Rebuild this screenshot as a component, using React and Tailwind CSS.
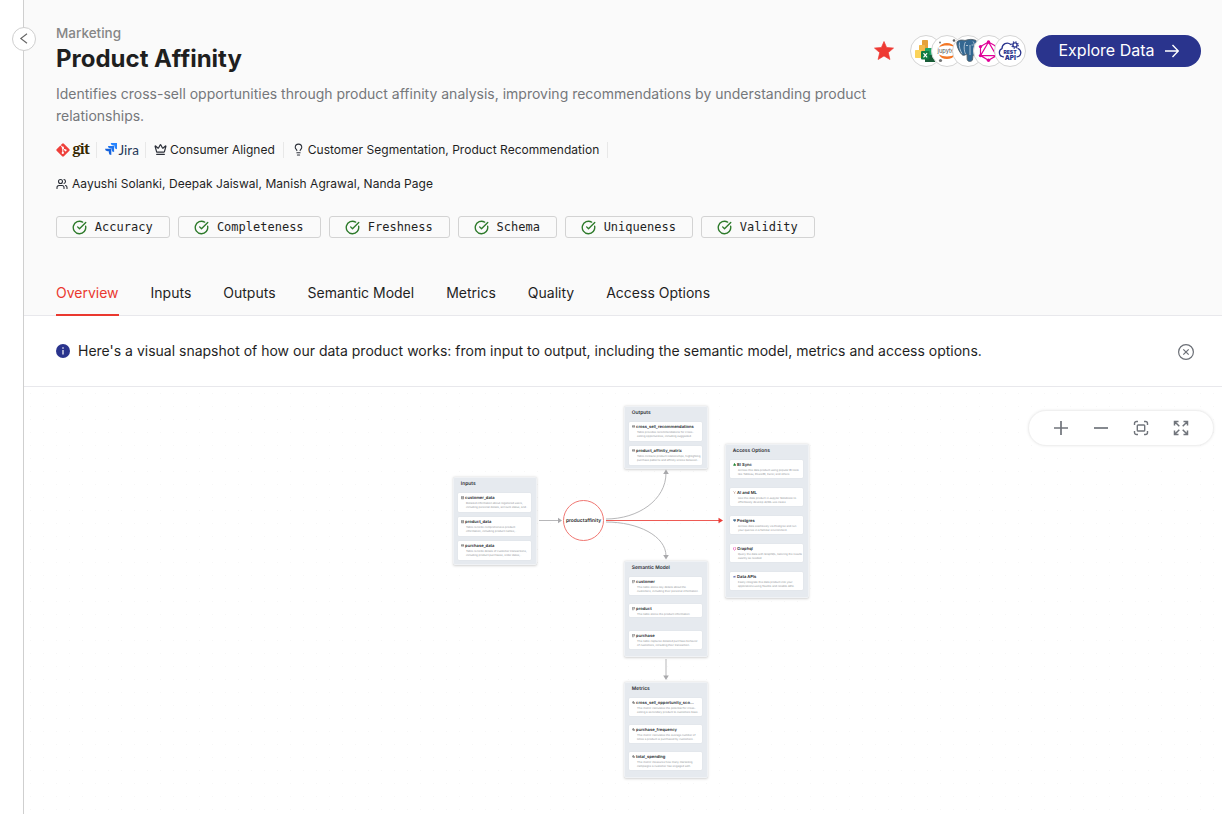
import React from "react";
import { Crown, Lightbulb, Users, CircleCheckBig } from "lucide-react";

function GitLogo() {
  return (
    <span className="flex items-center w-[35px] h-4">
      <svg className="-ml-[1.500px] -mt-px shrink-0" width="16" height="16" viewBox="0 0 15 16">
        <rect x="2.400" y="2.900" width="10.200" height="10.200" rx="1.200" fill="#ee3f3a" transform="rotate(45 7.5 8)" />
        <path d="M5 3.200 7.300 5.600V11M7.300 6l2.600 2.400" stroke="#fff" strokeWidth="1" fill="none" />
        <circle cx="7.300" cy="5.700" r="1.100" fill="#fff" />
        <circle cx="7.300" cy="10.900" r="1.100" fill="#fff" />
        <circle cx="10" cy="8.300" r="1.100" fill="#fff" />
      </svg>
      <span className="ml-[2px] -mt-[4px] font-['Noto_Serif','DejaVu_Serif',serif] font-bold text-[14.500px] leading-4 tracking-[-0.800px] text-[#362701]">git</span>
    </span>
  );
}

function JiraLogo() {
  return (
    <span className="flex items-center w-[35px] h-4">
      <svg className="shrink-0 -ml-[0.500px] -mt-[2px]" width="12" height="12" viewBox="0 0 12 12">
        <path d="M5.700 0H12v6.200a2.600 2.600 0 0 1-2.500-2.600V2.500H8.200A2.600 2.600 0 0 1 5.700 0z" fill="#2684ff" />
        <path d="M2.900 2.900h6.200v6.200a2.600 2.600 0 0 1-2.500-2.600V5.400H5.400a2.600 2.600 0 0 1-2.500-2.500z" fill="#1f74ee" />
        <path d="M0 5.800h6.300V12a2.600 2.600 0 0 1-2.500-2.600V8.300H2.500A2.600 2.600 0 0 1 0 5.800z" fill="#1562dc" />
      </svg>
      <span className="ml-[2px] font-[Lato,sans-serif] text-[13.500px] leading-4 text-[#253858]">Jira</span>
    </span>
  );
}

function Divider({ className = "" }) {
  return <span className={"h-4 w-px bg-[#e8e8e8] " + className} />;
}

const toolIcons = [
  <svg key="bi" width="30" height="30" viewBox="0 0 30 30">
    <rect x="11" y="4" width="6" height="18" rx=".8" fill="#e5a03a" />
    <rect x="8" y="9" width="6" height="13" rx=".8" fill="#f3b94a" />
    <rect x="4" y="14" width="6.500" height="8" rx=".8" fill="#fbd35a" />
    <rect x="14" y="12" width="10" height="14" rx="1" fill="#21a366" />
    <rect x="14" y="19" width="10" height="7" fill="#185c37" />
    <rect x="10" y="15" width="8.500" height="8.500" rx="1" fill="#107c41" />
    <path d="m12.500 17.200 3.600 4.200m0-4.200-3.600 4.200" stroke="#fff" strokeWidth="1.200" />
  </svg>,
  <svg key="jupyter" width="30" height="30" viewBox="0 0 30 30">
    <path d="M7 11.500c2.200-6 13.500-6 16 0-4-2.600-12-2.600-16 0zM7 18.500c2.200 6 13.500 6 16 0-4 2.600-12 2.600-16 0z" fill="#f37726" />
    <circle cx="8" cy="6.500" r="1" fill="#757575" />
    <circle cx="22" cy="4.500" r="1.300" fill="#616161" />
    <circle cx="8.500" cy="24.500" r="1.600" fill="#757575" />
    <text x="15" y="16.700" fontSize="5.800" textAnchor="middle" fontFamily="Inter, sans-serif" fill="#4e4e4e">jupyter</text>
  </svg>,
  <svg key="postgres" width="30" height="30" viewBox="0 0 30 30">
    <path d="M4 6c2-2.500 6-2 8-1.500C16 3 20 3 23 4.500c3 2 .5 8-1.500 12l3 1c-1 1.500-3 2-4.500 1.500l-.5 5c-1 2-5 2-5.300-.5l-.2-5.500c-1.500.5-3 2-4.500 1C6.500 17 3 9 4 6z" fill="#336791" stroke="#4f5d68" strokeWidth=".9" />
    <path d="M12.500 6c-2 3-1.500 9 0 12M20 5.500c2.500 3 1 7 .5 10M6.500 6.500c-1 4 1 8.500 2.500 11M13 9.500h2M18.500 9h2M17 9v10" stroke="#dfe8ef" strokeWidth=".7" fill="none" />
  </svg>,
  <svg key="graphql" width="30" height="30" viewBox="0 0 30 30">
    <path d="M14.500 6 22.500 10.600v9L14.500 24.300 6.500 19.600v-9zM14.500 6 6.500 19.600h16z" fill="none" stroke="#e10098" strokeWidth="1.200" />
    <g fill="#e10098">
      <circle cx="14.500" cy="6" r="1.700" /><circle cx="22.500" cy="10.600" r="1.700" /><circle cx="22.500" cy="19.600" r="1.700" />
      <circle cx="14.500" cy="24.300" r="1.700" /><circle cx="6.500" cy="19.600" r="1.700" /><circle cx="6.500" cy="10.600" r="1.700" />
    </g>
  </svg>,
  <svg key="rest" width="30" height="30" viewBox="0 0 30 30">
    <path d="M8.500 20.800C4 21 2.800 14.500 7 12.600 7 8 12 5.500 15.800 8.500M23 12.500c4.200 2 3.400 8-1 8.300" fill="none" stroke="#2a348d" strokeWidth="1.300" strokeLinecap="round" />
    <circle cx="20" cy="9" r="2.100" fill="none" stroke="#2a348d" strokeWidth="1.400" />
    <circle cx="20" cy="9" r="3.200" fill="none" stroke="#2a348d" strokeWidth="1.200" strokeDasharray="1.300 1.210" />
    <text x="15" y="18.200" fontSize="5" fontWeight="900" textAnchor="middle" fontFamily="Inter, sans-serif" fill="#2a348d">REST</text>
    <text x="15.200" y="23.800" fontSize="6.400" fontWeight="900" textAnchor="middle" fontFamily="Inter, sans-serif" fill="#2a348d">API</text>
  </svg>,
];

const checks = [
  ["Accuracy", "w-[114px]"],
  ["Completeness", "w-[143px]"],
  ["Freshness", "w-[121px]"],
  ["Schema", "w-[99px]"],
  ["Uniqueness", "w-[128px]"],
  ["Validity", "w-[114px]"],
];

const tabs = ["Overview", "Inputs", "Outputs", "Semantic Model", "Metrics", "Quality", "Access Options"];

function CardIcon({ kind }) {
  const paths = {
    table: <path d="M1 1h8v8H1zM1 4h8M1 6.500h8" stroke="#444" strokeWidth="1.300" fill="none" />,
    output: <path d="M1 2h8v5H1zM1 4.500h8" stroke="#444" strokeWidth="1.300" fill="none" />,
    model: <path d="M1 1h8v4M1 1v8h4M1 4h8M5 9l4-4" stroke="#444" strokeWidth="1.300" fill="none" />,
    metric: <path d="M0 6h2l2-5 2 8 2-4h2" stroke="#222" strokeWidth="1.500" fill="none" />,
    sync: <path d="M3 1h3v3h3v5H1V5h2z" fill="#238636" />,
    ml: <path d="M1 1l4 4 4-4M5 5v4" stroke="#b08070" strokeWidth="1.500" fill="none" />,
    postgres: <path d="M1 1h8v5H7v3H4V6H1z" fill="#4d7598" />,
    graphql: <path d="M5 0l4 3v4L5 10 1 7V3z" stroke="#e535ab" strokeWidth="1.800" fill="none" />,
    api: <path d="M1 7a3 3 0 0 1 3-4l4-1v6H1z" fill="#7a82bc" />,
  };
  return <svg className="shrink-0" width="3.200" height="3.200" viewBox="0 0 10 10">{paths[kind]}</svg>;
}

const panels = [
  {
    title: "Inputs", box: "left-[428.500px] top-[89.500px] w-[84px] h-[88.500px]", list: "gap-[4.800px]", card: "h-[19.200px]",
    cards: [
      ["table", "customer_data", "Detailed information about registered users,", "including personal details, account status, and..."],
      ["table", "product_data", "Table records comprehensive product", "information, including product names,..."],
      ["output", "purchase_data", "Table records details of customer transactions,", "including product purchases, order dates,..."],
    ],
  },
  {
    title: "Outputs", box: "left-[599.500px] top-[18.500px] w-[84px] h-[63.500px]", list: "gap-[4.800px]", card: "h-[19.200px]",
    cards: [
      ["output", "cross_sell_recommendations", "Table provides recommendations for cross-", "selling opportunities, including suggested..."],
      ["output", "product_affinity_matrix", "Table contains product relationships, highlighting", "purchase patterns and affinity scores between..."],
    ],
  },
  {
    title: "Access Options", box: "left-[700.500px] top-[56.500px] w-[84px] h-[154px]", list: "gap-[9.700px]", card: "h-[18.300px]",
    cards: [
      ["sync", "BI Sync", "Access this data product using popular BI tools", "like Tableau, PowerBI, Excel, and others."],
      ["ml", "AI and ML", "Use this data product in Jupyter Notebook to", "effortlessly develop AI/ML use cases."],
      ["postgres", "Postgres", "Access data seamlessly via Postgres and run", "your queries in a familiar environment."],
      ["graphql", "Graphql", "Query the data with GraphQL, tailoring the results", "exactly as needed."],
      ["api", "Data APIs", "Easily integrate this data product into your", "applications using flexible and reliable APIs."],
    ],
  },
  {
    title: "Semantic Model", box: "left-[599.500px] top-[173.500px] w-[84px] h-[96px]", list: "gap-[9px]", card: "h-[18px]",
    cards: [
      ["model", "customer", "This table stores key details about the", "customers, including their personal information..."],
      ["model", "product", "This table stores the product information", null],
      ["model", "purchase", "This table captures detailed purchase behavior", "of customers, including their transaction..."],
    ],
  },
  {
    title: "Metrics", box: "left-[599.500px] top-[294.500px] w-[84px] h-[96px]", list: "gap-[9px]", card: "h-[18px]",
    cards: [
      ["metric", "cross_sell_opportunity_sco...", "This metric calculates the potential for cross-", "selling a secondary product to customers base..."],
      ["metric", "purchase_frequency", "This metric calculates the average number of", "times a product is purchased by customers..."],
      ["metric", "total_spending", "This metric measures how many marketing", "campaigns a customer has engaged with."],
    ],
  },
];

function Panel({ title, box, list, card, cards }) {
  return (
    <section className={"absolute flex flex-col rounded-[2px] bg-[#e6eaef] border border-[#f0f2f5] shadow-[0_0.500px_2.500px_rgba(0,0,0,0.180)] px-[4.500px] pt-[3.200px] [text-rendering:geometricPrecision] " + box}>
      <h3 className="ml-[2.800px] text-[4.900px] leading-[6px] font-semibold text-[#2c3036] whitespace-nowrap">{title}</h3>
      <div className={"mt-[5.900px] flex flex-col " + list}>
        {cards.map(([kind, name, a, b]) => (
          <div key={name} className={card}>
            <div className={"rounded-[1px] bg-white shadow-[0_0_1px_rgba(0,0,0,0.120)] pl-[3px] pt-[3.900px] overflow-hidden " + (b ? "h-full" : "h-[13.500px]")}>
              <div className="flex gap-[0.900px] text-[4.120px] leading-[4.800px] font-semibold text-[#24272c] whitespace-nowrap">
                <CardIcon kind={kind} />
                {name}
              </div>
              <p className="-mt-[0.600px] pl-[5px] text-[2.740px] leading-[4.500px] text-[#8b8f94] whitespace-nowrap">
                {a}
                {b && <br />}
                {b}
              </p>
            </div>
          </div>
        ))}
      </div>
    </section>
  );
}

export default function App() {
  return (
    <div className="flex h-[814px] w-[1222px] overflow-hidden bg-white font-[Inter,sans-serif] text-[#1f1f1f]">
      <aside className="relative w-6 shrink-0 border-r border-[#cfcfcf]">
        <button className="absolute left-3 top-[26.500px] z-10 flex size-6 items-center justify-center rounded-full border border-[#cfcfcf] bg-white">
          <svg width="10" height="12" viewBox="0 0 10 12" fill="none" stroke="#666" strokeWidth="1.100"><path d="M8 .8 1.800 5.500 8 10.200" /></svg>
        </button>
      </aside>
      <main className="flex min-w-0 flex-1 flex-col">
        <header className="flex h-[316px] shrink-0 flex-col border-b border-[#e8e8ec] bg-[#fafafa] pl-8 pr-[21px]">
          <div className="flex justify-between pt-[23px]">
            <div className="w-[811px]">
              <div className="text-[13.500px] leading-5 font-medium text-[#868686]">Marketing</div>
              <h1 className="text-2xl leading-8 font-bold">Product Affinity</h1>
              <p className="mt-2 text-sm leading-[22px] text-[#75777b] whitespace-nowrap">
                Identifies cross-sell opportunities through product affinity analysis, improving recommendations by understanding product<br />relationships.
              </p>
            </div>
            <div className="mt-3 flex h-8 shrink-0 items-center">
              <svg className="-mt-px" width="20" height="19" viewBox="0 0 20 19"><path d="M10 .5l2.600 6 6.900.6-5.200 4.500 1.600 6.900L10 14.900l-5.900 3.600 1.600-6.900L.5 7.100l6.900-.6z" fill="#ee3a33" stroke="#ee3a33" strokeWidth=".7" strokeLinejoin="round" /></svg>
              <div className="ml-4 flex">
                {toolIcons.map((icon, i) => (
                  <span key={i} className={"flex size-8 shrink-0 items-center justify-center overflow-hidden rounded-full border border-[#d5d5d5] bg-white " + (i ? "-ml-[11px]" : "")}>{icon}</span>
                ))}
              </div>
              <button className="ml-[10px] flex h-8 w-[165px] items-center justify-center rounded-full bg-[#2a348d] text-base text-white">
                <span className="-mt-[2px]">Explore Data</span>
                <svg className="ml-2.5" width="14" height="14" viewBox="0 0 14 14" fill="none" stroke="#fff" strokeWidth="1.400"><path d="M0 7h13M7.500 1l5.800 6-5.800 6" /></svg>
              </button>
            </div>
          </div>

          <div className="mt-[15px] flex h-4 items-center text-xs leading-4 whitespace-nowrap">
            <GitLogo />
            <Divider className="ml-[5px]" />
            <span className="ml-2"><JiraLogo /></span>
            <Divider className="ml-[5px]" />
            <Crown className="ml-2 -mt-px" size={13} strokeWidth={2.200} color="#2b2f38" />
            <span className="ml-[3px]">Consumer Aligned</span>
            <Divider className="ml-2" />
            <Lightbulb className="ml-2 -mt-px" size={13} strokeWidth={2} color="#2b2f38" />
            <span className="ml-[3px] tracking-[0.020px]">Customer Segmentation, Product Recommendation</span>
            <Divider className="ml-2" />
          </div>

          <div className="mt-[18px] flex h-4 items-center gap-1 text-xs leading-4 tracking-[0.035px] whitespace-nowrap">
            <Users size={12} strokeWidth={2.200} color="#2b2f38" />
            Aayushi Solanki, Deepak Jaiswal, Manish Agrawal, Nanda Page
          </div>

          <div className="mt-6 flex gap-2">
            {checks.map(([label, width]) => (
              <span key={label} className={"flex h-[22px] items-center justify-center gap-[7.500px] rounded-[3px] border border-[#d3d3d3] pr-px font-['DejaVu_Sans_Mono',monospace] text-xs " + width}>
                <CircleCheckBig size={15} strokeWidth={2.200} color="#2d7a2a" />
                {label}
              </span>
            ))}
          </div>

          <nav className="mt-auto flex h-[46px] gap-8 text-sm leading-[48px]">
            {tabs.map((tab, i) => (
              <a key={tab} className={i === 0 ? "relative z-10 -mb-px h-[47px] border-b-2 border-[#ea382f] text-[#ea382f]" : ""}>{tab}</a>
            ))}
          </nav>
        </header>

        <div className="flex h-[71px] shrink-0 items-center border-b border-[#e8e8ec] pl-8 pr-7">
          <svg width="14" height="14" viewBox="0 0 14 14"><circle cx="7" cy="7" r="7" fill="#2a348d" /><path d="M7 6v4.500M7 3.300v1.400" stroke="#fff" strokeWidth="1.200" /></svg>
          <p className="ml-2 text-sm">Here's a visual snapshot of how our data product works: from input to output, including the semantic model, metrics and access options.</p>
          <svg className="ml-auto mt-px" width="16" height="16" viewBox="0 0 16 16" fill="none" stroke="#6b6f76" strokeWidth="1.200"><circle cx="8" cy="8" r="7.400" /><path d="m5.300 5.300 5.400 5.400m0-5.400-5.400 5.400" /></svg>
        </div>

        <div className="relative flex-1 bg-[radial-gradient(#f7f7f7_0.700px,transparent_1px)] bg-[length:13px_13px]">
          <svg className="absolute inset-0" width="1198" height="427" viewBox="24 387 1198 427" fill="none">
            <g stroke="#b7b7b9" strokeWidth="1">
              <path d="M539 520.500h20M606 519C638 519 666 500 666 473M606 522C638 522 666 536 666 556M666 659v18" />
            </g>
            <path d="M606 520.500h114" stroke="#ee5a54" strokeWidth="1.200" />
            <path d="m558 517.700 4 2.800-4 2.800zM663.200 474l2.800-4.500 2.800 4.500zM663.200 555l2.800 4.500 2.800-4.500zM663.200 675.500l2.800 4.500 2.800-4.500z" fill="#a9a9ac" />
            <path d="m718.500 517.700 4.500 2.800-4.500 2.800z" fill="#ea3c36" />
          </svg>
          <div className="absolute left-[539px] top-[113px] flex size-[41px] items-center justify-center rounded-full border border-[#f07772] bg-white pt-[1.400px] text-[4.900px] font-semibold whitespace-nowrap [text-rendering:geometricPrecision]">productaffinity</div>
          {panels.map((p) => <Panel key={p.title} {...p} />)}
          <div className="absolute left-[1004px] top-[23px] flex h-9 w-[186px] items-center justify-center gap-6 rounded-full border border-[#f0f0f0] bg-white text-[#70747b] shadow-[0_0_3px_rgba(0,0,0,0.080)]">
            <svg width="16" height="16" viewBox="0 0 16 16" fill="none" stroke="currentColor" strokeWidth="1.700"><path d="M1 8h14M8 1v14" /></svg>
            <svg width="16" height="16" viewBox="0 0 16 16" fill="none" stroke="currentColor" strokeWidth="1.700"><path d="M1 8h14" /></svg>
            <svg width="16" height="16" viewBox="0 0 16 16" fill="none" stroke="currentColor" strokeWidth="1.400"><path d="M1.500 5V3.500a2 2 0 0 1 2-2H5M11 1.500h1.500a2 2 0 0 1 2 2V5M14.500 11v1.500a2 2 0 0 1-2 2H11M5 14.500H3.500a2 2 0 0 1-2-2V11" /><rect x="4.300" y="5" width="7.400" height="6" rx=".8" /></svg>
            <svg width="16" height="16" viewBox="0 0 16 16" fill="none" stroke="currentColor" strokeWidth="1.500"><path d="M6.300 6.300 2 2M1.500 5.500v-4h4M9.700 6.300 14 2M10.500 1.500h4v4M6.300 9.700 2 14M1.500 10.500v4h4M9.700 9.700 14 14M10.500 14.500h4v-4" /></svg>
          </div>
        </div>
      </main>
    </div>
  );
}
